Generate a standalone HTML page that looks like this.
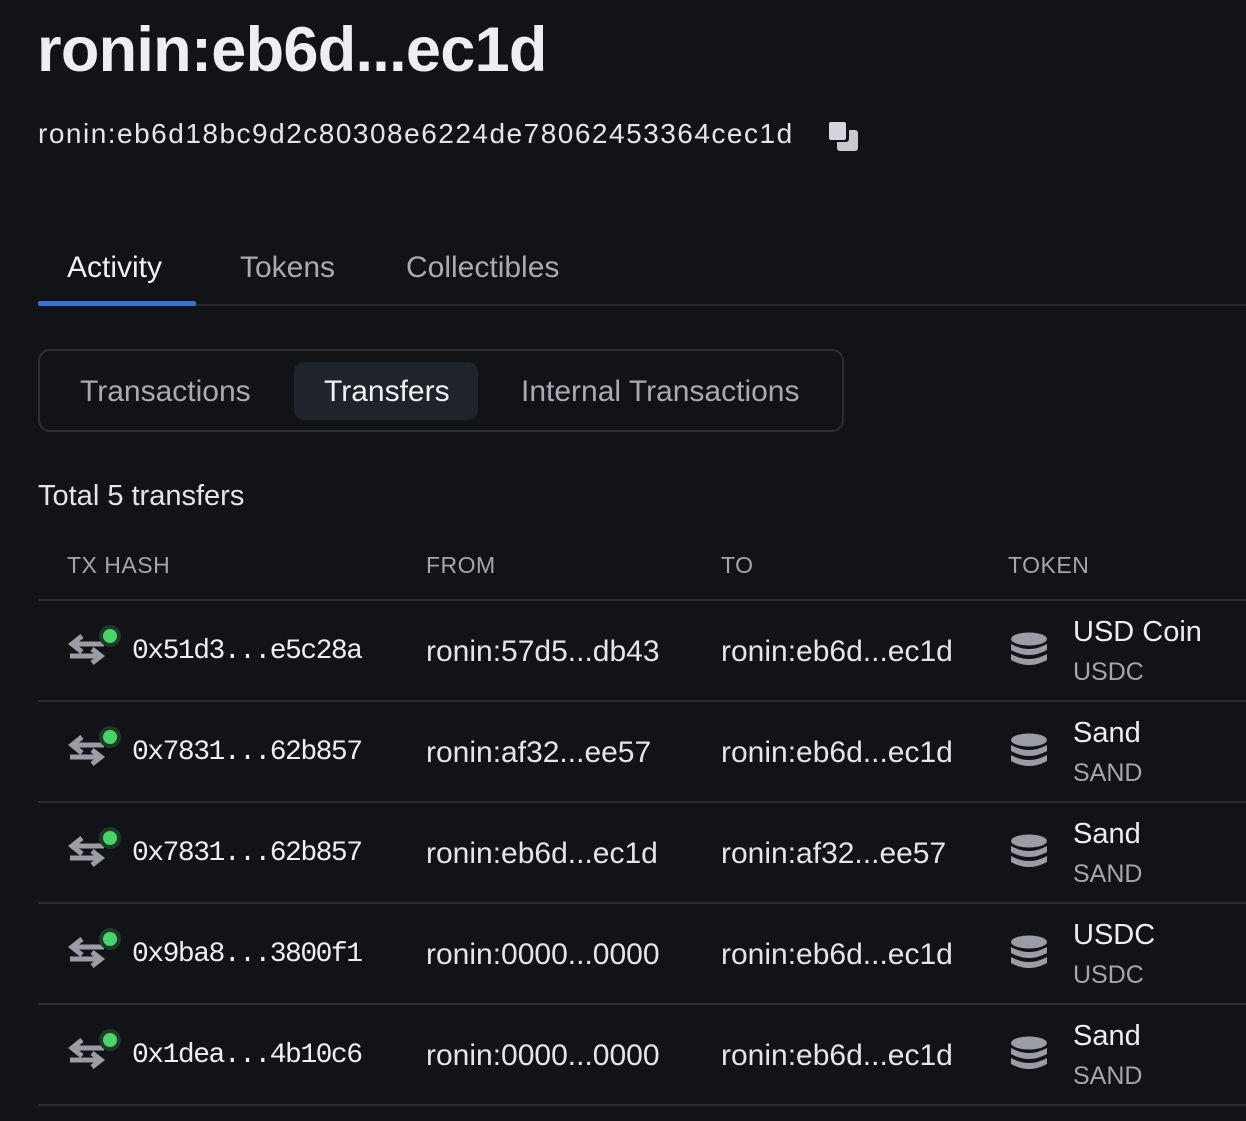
<!DOCTYPE html>
<html><head><meta charset="utf-8"><style>
*{margin:0;padding:0;box-sizing:border-box}
body{width:1246px;height:1121px;background:#111317;color:#e8e9ec;font-family:"Liberation Sans",sans-serif;position:relative;overflow:hidden}
.a{position:absolute;white-space:nowrap}
.line{position:absolute;left:38px;right:0;height:2px;background:#2a2d33}
.mono{font-family:"Liberation Mono",monospace}
</style></head><body>
<div class="a" style="left:37px;top:14px;font-size:63px;font-weight:bold;letter-spacing:-0.7px;color:#eceef1">ronin:eb6d...ec1d</div>
<div class="a" style="left:38px;top:118px;font-size:28px;letter-spacing:1.5px;color:#e4e5e8">ronin:eb6d18bc9d2c80308e6224de78062453364cec1d</div>
<svg class="a" style="left:828px;top:121px" width="32" height="32" viewBox="0 0 32 32"><rect x="9" y="9" width="21" height="21" rx="3" fill="#c8cad2"/><rect x="0" y="0" width="21" height="21" rx="3" fill="#111317"/><rect x="1" y="1" width="17" height="18" rx="2" fill="#d4d6de"/></svg>
<div class="a" style="left:67px;top:251px;font-size:30px;color:#f0f1f3">Activity</div>
<div class="a" style="left:240px;top:251px;font-size:30px;color:#a8abb2">Tokens</div>
<div class="a" style="left:406px;top:251px;font-size:30px;color:#a8abb2">Collectibles</div>
<div class="a" style="left:38px;top:304px;width:1208px;height:2px;background:#25282e"></div>
<div class="a" style="left:38px;top:301px;width:158px;height:5px;background:#3a6fd8;border-radius:2px"></div>
<div class="a" style="left:38px;top:349px;width:806px;height:83px;border:2px solid #2c2f36;border-radius:12px"></div>
<div class="a" style="left:294px;top:362px;width:184px;height:58px;background:#1e232c;border-radius:10px"></div>
<div class="a" style="left:80px;top:375px;font-size:30px;color:#a8abb2">Transactions</div>
<div class="a" style="left:324px;top:375px;font-size:30px;color:#f0f1f3">Transfers</div>
<div class="a" style="left:521px;top:375px;font-size:30px;color:#a8abb2">Internal Transactions</div>
<div class="a" style="left:38px;top:480px;font-size:29px;color:#e4e5e8">Total 5 transfers</div>
<div class="a" style="left:67px;top:552px;font-size:23px;color:#a3a6ad;letter-spacing:0.5px">TX HASH</div>
<div class="a" style="left:426px;top:552px;font-size:23px;color:#a3a6ad;letter-spacing:0.5px">FROM</div>
<div class="a" style="left:721px;top:552px;font-size:23px;color:#a3a6ad;letter-spacing:0.5px">TO</div>
<div class="a" style="left:1008px;top:552px;font-size:23px;color:#a3a6ad;letter-spacing:0.5px">TOKEN</div>
<div class="line" style="top:599px"></div>
<div id="rows"></div>
<script>
var d=[["0x51d3...e5c28a","ronin:57d5...db43","ronin:eb6d...ec1d","USD Coin","USDC"],
["0x7831...62b857","ronin:af32...ee57","ronin:eb6d...ec1d","Sand","SAND"],
["0x7831...62b857","ronin:eb6d...ec1d","ronin:af32...ee57","Sand","SAND"],
["0x9ba8...3800f1","ronin:0000...0000","ronin:eb6d...ec1d","USDC","USDC"],
["0x1dea...4b10c6","ronin:0000...0000","ronin:eb6d...ec1d","Sand","SAND"]];
var h="";
d.forEach(function(r,i){var y=600+i*101;
h+='<svg class="a" style="left:68px;top:'+(y+24)+'px" width="56" height="46" viewBox="0 0 56 46"><path d="M4 20h32M14 12l-10 8 10 8" stroke="#9a9da4" stroke-width="5" fill="none"/><path d="M2 32h30M24 25l9 7-9 7" stroke="#9a9da4" stroke-width="5" fill="none"/><circle cx="42" cy="12" r="11" fill="#1f3a28"/><circle cx="42" cy="12" r="7" fill="#4cd26a"/></svg>';
h+='<div class="a mono" style="left:132px;top:'+(y+36)+'px;font-size:28px;letter-spacing:-1.5px;color:#eceef1">'+r[0]+'</div>';
h+='<div class="a" style="left:426px;top:'+(y+35)+'px;font-size:30px;color:#e4e5e8">'+r[1]+'</div>';
h+='<div class="a" style="left:721px;top:'+(y+35)+'px;font-size:30px;color:#e4e5e8">'+r[2]+'</div>';
h+='<svg class="a" style="left:1010px;top:'+(y+32)+'px" width="38" height="36" viewBox="0 0 38 36"><ellipse cx="19" cy="7" rx="18" ry="6.5" fill="#9a9da4"/><path d="M1 12q18 10 36 0v6q-18 10-36 0z" fill="#9a9da4"/><path d="M1 22q18 10 36 0v6q-18 10-36 0z" fill="#9a9da4"/></svg>';
h+='<div class="a" style="left:1073px;top:'+(y+16)+'px;font-size:29px;color:#eceef1">'+r[3]+'</div>';
h+='<div class="a" style="left:1073px;top:'+(y+58)+'px;font-size:25px;color:#a3a6ad">'+r[4]+'</div>';
h+='<div class="line" style="top:'+(y+100)+'px"></div>';});
document.getElementById("rows").innerHTML=h;
</script>
</body></html>
